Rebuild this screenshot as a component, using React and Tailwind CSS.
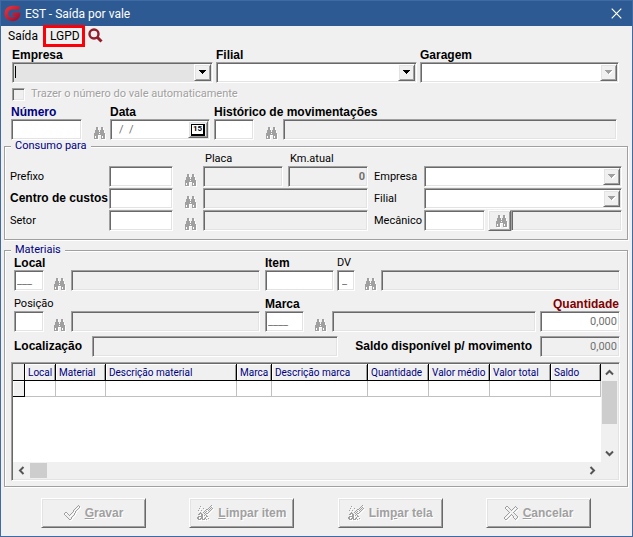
import React from 'react';

const SUNKEN =
  'border border-t-[#a0a0a0] border-l-[#a0a0a0] border-r-white border-b-white shadow-[inset_1px_1px_0_#696969,inset_-1px_-1px_0_#e3e3e3]';
const RAISED =
  'border border-t-white border-l-white border-r-[#696969] border-b-[#696969] bg-[#f0f0f0] shadow-[inset_1px_1px_0_#e3e3e3,inset_-1px_-1px_0_#a0a0a0]';
const ETCHED = 'border border-[#a0a0a0] shadow-[1px_1px_0_#fff,inset_1px_1px_0_#fff]';
const STRONG = "font-['Liberation_Sans',Arial,sans-serif] text-[12px] font-bold";

/* Small one-colour glyphs, one character per pixel, with the white disabled edge. */
function Bitmap({ rows, edge = true, color = '#a0a0a0' }) {
  let d = '';
  rows.forEach((row, y) => {
    [...row].forEach((c, x) => {
      if (c === 'X') d += `M${x} ${y}h1v1h-1z`;
    });
  });
  const w = rows[0].length + 1;
  const h = rows.length + 1;
  return (
    <svg width={w} height={h} viewBox={`0 0 ${w} ${h}`} shapeRendering="crispEdges" className="shrink-0" aria-hidden="true">
      {edge && <path d={d} fill="#fff" transform="translate(1 1)" />}
      <path d={d} fill={color} />
    </svg>
  );
}

const BINOCULARS = [
  '..XX...XX..',
  '..XX...XX..',
  '..XX...XX..',
  '.XXXX.XXXX.',
  '.XXXX.XXXX.',
  '.XXXXXXXXX.',
  'XXXXX.XXXXX',
  'XXXXXXXXXXX',
  'XXXX...XXXX',
  'X.XX...X.XX',
  'X.XX...X.XX',
  'XXXX...XXXX',
];
const CHECK = [
  '..............X.',
  '.............X.X',
  '............X..X',
  '...........X..X.',
  '..........X..X..',
  '.........X..X...',
  '.........X.X....',
  '.XX.....X..X....',
  'X..X...X..X.....',
  'X...X.X...X.....',
  '.X...X...X......',
  '..X.....X.......',
  '...X...X........',
  '....X..X........',
  '.....XX.........',
];
const CLEAN = [
  '..............X.',
  '...X.........X..',
  '............X.X.',
  '..X...X....X.X.X',
  '.........XX.X.X.',
  '.X..X...X..X.X..',
  '.......X.X..X...',
  '...X..X.X..X....',
  '..XXX..X.XX.....',
  '.XX.XX..X.......',
  '....XX.X.X......',
  '.XXXXX...XX.....',
  'XX..XX..X.......',
  'XX.XXX.XX..X....',
  '.XXX.XXX.X......',
];
const CROSS = [
  '..XX.......X..',
  '.X..X.....X.X.',
  '.X...X...X...X',
  '..X...X.X...X.',
  '...X...X...X..',
  '....X.....X...',
  '.....X...X....',
  '....X.....X...',
  '...X...X...X..',
  '..X...X.X...X.',
  '.X...X...X...X',
  'X...X....X...X',
  'X..X......X.X.',
  '.XX........X..',
];

const Binoculars = ({ className = 'w-[27px] pl-2.5' }) => (
  <button type="button" disabled aria-label="Pesquisar" className={`flex h-[21px] shrink-0 items-end ${className}`}>
    <Bitmap rows={BINOCULARS} />
  </button>
);

function Box({ id, className = '', off, ...rest }) {
  return (
    <input
      id={id}
      type="text"
      readOnly
      disabled={off}
      className={`h-[21px] min-w-0 px-1 text-[11px] leading-[17px] text-[#707070] outline-none ${SUNKEN} ${off ? 'bg-[#f0f0f0]' : 'bg-white'} ${className}`}
      {...rest}
    />
  );
}

function Combo({ id, gray, off, caret }) {
  return (
    <div className="relative h-[21px] w-full min-w-0">
      <select id={id} disabled={off} defaultValue="" className={`block h-[21px] w-full appearance-none px-1 outline-none ${SUNKEN} ${gray ? 'bg-[#e4e4e4]' : 'bg-white'}`}>
        <option value=""></option>
      </select>
      {caret && <span className="absolute left-[3px] top-1 h-3 w-px bg-black" />}
      <span className={`pointer-events-none absolute right-0.5 top-0.5 flex h-[17px] w-[17px] items-center justify-center ${RAISED}`}>
        <Bitmap rows={['XXXXXXX', '.XXXXX.', '..XXX..', '...X...']} edge={!!off} color={off ? '#a0a0a0' : '#000'} />
      </span>
    </div>
  );
}

/* A caption stacked over its control. */
function Field({ label, id, bold = true, color = 'text-black', className = '', labelClass = '', children }) {
  return (
    <div className={`flex min-w-0 flex-col ${className}`}>
      <label
        htmlFor={id}
        className={`whitespace-nowrap leading-[14px] ${bold ? STRONG : 'text-[11px]'} ${color} ${labelClass}`}
      >
        {label}
      </label>
      {children}
    </div>
  );
}

function Group({ title, className = '', children }) {
  return (
    <fieldset className={`min-w-0 ${ETCHED} ${className}`}>
      <legend className="ml-1.5 bg-[#f0f0f0] px-1 text-[11px] leading-[12px] text-[#000080]">{title}</legend>
      {children}
    </fieldset>
  );
}

function Action({ icon, children }) {
  return (
    <button
      type="button"
      disabled
      className={`flex h-[30px] w-[105px] items-center justify-center gap-1 whitespace-nowrap text-[#a0a0a0] [text-shadow:1px_1px_0_#fff] ${STRONG} ${RAISED}`}
    >
      <Bitmap rows={icon} />
      <span>{children}</span>
    </button>
  );
}

const COLUMNS = [
  ['Local', 'w-[31px]'],
  ['Material', 'w-[50px]'],
  ['Descrição material', 'w-[131px]'],
  ['Marca', 'w-[35px]'],
  ['Descrição marca', 'w-[96px]'],
  ['Quantidade', 'w-[61px]'],
  ['Valor médio', 'w-[61px]'],
  ['Valor total', 'w-[61px]'],
  ['Saldo', 'w-[50px]'],
];

function Chevron({ d }) {
  return (
    <svg width="9" height="9" viewBox="0 0 9 9" fill="none" stroke="#555" strokeWidth="2" aria-hidden="true">
      <path d={d} />
    </svg>
  );
}

function Materials() {
  return (
    <div className={`ml-1.5 mr-[7px] mt-[5px] bg-white p-px ${SUNKEN}`}>
      <div className="flex h-[98px]">
        <div className="min-w-0 flex-1 overflow-hidden">
          <table className="w-full table-fixed border-separate border-spacing-0">
            <thead>
              <tr className="h-[17px] bg-[#f0f0f0] text-left text-[10px] leading-[14px] text-[#000080]">
                <th className="w-3 border-b border-r border-black p-0" aria-label="Seleção" />
                {COLUMNS.map(([name, width]) => (
                  <th
                    key={name}
                    className={`whitespace-nowrap border-b border-r border-black p-0 pl-[3px] pt-px font-normal shadow-[inset_1px_1px_0_#fff,inset_-1px_0_0_#a0a0a0] ${width}`}
                  >
                    {name}
                  </th>
                ))}
              </tr>
            </thead>
            <tbody>
              <tr className="h-4">
                <td className="border-b border-r border-black bg-[#f0f0f0] p-0 shadow-[inset_1px_1px_0_#fff]" />
                {COLUMNS.map(([name]) => (
                  <td key={name} className="border-b border-r border-[#c0c0c0] p-0" />
                ))}
              </tr>
            </tbody>
          </table>
        </div>
        <div className="flex w-[17px] shrink-0 flex-col items-center bg-[#f0f0f0]">
          <span className="flex h-[17px] items-center"><Chevron d="M1 6.5 4.5 3 8 6.5" /></span>
          <span className="h-[43px] w-[15px] bg-[#cdcdcd]" />
          <span className="mt-auto flex h-[17px] items-center"><Chevron d="M1 2.5 4.5 6 8 2.5" /></span>
        </div>
      </div>
      <div className="flex h-[17px] items-center bg-[#f0f0f0] pr-[17px]">
        <span className="flex w-[17px] justify-center"><Chevron d="M6.5 1 3 4.5 6.5 8" /></span>
        <span className="h-[15px] w-[17px] bg-[#cdcdcd]" />
        <span className="ml-auto flex w-[17px] justify-center"><Chevron d="M2.5 1 6 4.5 2.5 8" /></span>
      </div>
    </div>
  );
}

export default function App() {
  return (
    <div className="min-h-screen w-full border border-[#3f6aa3] bg-[#f0f0f0] font-[Roboto,'Liberation_Sans',sans-serif] text-black">
      <header className="flex h-[25px] items-center bg-[#2d5a92] pl-[3px] pr-2.5 text-[12px] text-white">
        <svg width="17" height="17" viewBox="0 0 17 17" aria-hidden="true">
          <defs>
            <linearGradient id="brand" x1="0" y1="0" x2="1" y2="1">
              <stop offset="0" stopColor="#e8303a" />
              <stop offset="1" stopColor="#9c1030" />
            </linearGradient>
          </defs>
          <path
            fill="none"
            stroke="url(#brand)"
            strokeWidth="3.8"
            d="M15.500 3.600C13.500 2.800 11 2.700 9 2.700 5 2.700 2.300 5 2.300 8.400c0 3.600 2.600 5.900 6 5.900 3.600 0 5.800-1.900 6.100-4.900H8.600"
          />
        </svg>
        <h1 className="pl-1">EST - Saída por vale</h1>
        <button type="button" aria-label="Fechar" className="ml-auto">
          <svg width="11" height="11" viewBox="0 0 11 11" stroke="#fff" strokeWidth="1.2" aria-hidden="true">
            <path d="M.7.7 10.300 10.300M10.300.7.7 10.300" />
          </svg>
        </button>
      </header>

      <nav className="flex h-[22px] items-center pl-[7px] pb-[3px] text-[12px]">
        <button type="button" className="w-[42px] text-left">Saída</button>
        <button type="button" className="relative w-[38px] text-left">
          LGPD
          <span className="absolute -left-[7px] -top-0.5 h-[22px] w-[42px] border-[3px] border-[#fb0007]" />
        </button>
        <button type="button" aria-label="Pesquisar">
          <svg width="15" height="15" viewBox="0 0 15 15" fill="none" stroke="#941c2b" aria-hidden="true">
            <circle cx="6" cy="6" r="4.500" strokeWidth="2.400" />
            <path d="m9.500 9.500 4 4" strokeWidth="3" />
          </svg>
        </button>
      </nav>

      <main>
        <div className="grid grid-cols-[201fr_201fr_199fr] gap-[3px] pl-[11px] pr-[13px]">
          <Field label="Empresa" id="empresa"><Combo id="empresa" gray caret /></Field>
          <Field label="Filial" id="filial"><Combo id="filial" /></Field>
          <Field label="Garagem" id="garagem"><Combo id="garagem" off /></Field>
        </div>

        <div className="flex h-[22px] items-center gap-1.5 pl-[11px] pt-px text-[11px] text-[#a0a0a0] [text-shadow:1px_1px_0_#fff]">
          <input id="auto" type="checkbox" disabled className={`h-[13px] w-[13px] appearance-none bg-[#f0f0f0] ${SUNKEN}`} />
          <label htmlFor="auto">Trazer o número do vale automaticamente</label>
        </div>

        <div className="flex items-end pl-2.5 pr-[15px]">
          <Field label="Número" id="numero" color="text-[#000080]" className="w-[71px]"><Box id="numero" /></Field>
          <Binoculars className="w-7 pl-3" />
          <Field label="Data" id="data" className="w-[100px]">
            <div className="relative flex">
              <Box id="data" className="w-full pl-2" defaultValue="/  /" />
              <button type="button" aria-label="Calendário" className={`absolute right-0.5 top-0.5 flex h-[17px] w-5 items-center justify-center ${RAISED}`}>
                <span className="flex h-[12px] w-[14px] items-center justify-center border border-b-2 border-r-2 border-black bg-white text-[8px] font-bold leading-none">15</span>
              </button>
            </div>
          </Field>
          <Field label="Histórico de movimentações" id="historico" className="ml-1 w-10"><Box id="historico" /></Field>
          <Binoculars className="w-[29px] pl-3" />
          <Box off aria-label="Descrição do histórico" className="flex-1" />
        </div>

        <div className="pl-[3px] pr-1">
          <Group title="Consumo para" className="pb-2">
            <div className="grid grid-cols-[minmax(0,358fr)_minmax(0,248fr)] items-end gap-1.5 px-[5px] text-[11px]">
              <div className="flex flex-col gap-px">
                <div className="flex items-end">
                  <label htmlFor="prefixo" className="w-[99px] shrink-0 leading-[21px]">Prefixo</label>
                  <Box id="prefixo" className="w-16 shrink-0" />
                  <Binoculars className="w-[30px] pl-3" />
                  <div className="flex min-w-0 flex-1 gap-[5px]">
                    <Field label="Placa" id="placa" bold={false} className="flex-1" labelClass="pl-0.5 leading-[13px]"><Box id="placa" off /></Field>
                    <Field label="Km.atual" id="km" bold={false} className="flex-1" labelClass="pl-0.5 leading-[13px]">
                      <Box id="km" off defaultValue="0" className="pr-0.5 text-right font-bold" />
                    </Field>
                  </div>
                </div>
                <div className="flex">
                  <label htmlFor="centro" className={`w-[99px] shrink-0 whitespace-nowrap leading-[21px] ${STRONG}`}>Centro de custos</label>
                  <Box id="centro" className="w-16 shrink-0" />
                  <Binoculars className="w-[30px] pl-3" />
                  <Box off aria-label="Descrição do centro de custos" className="flex-1" />
                </div>
                <div className="flex">
                  <label htmlFor="setor" className="w-[99px] shrink-0 leading-[21px]">Setor</label>
                  <Box id="setor" className="w-16 shrink-0" />
                  <Binoculars className="w-[30px] pl-3" />
                  <Box off aria-label="Descrição do setor" className="flex-1" />
                </div>
              </div>
              <div className="flex flex-col gap-px">
                <div className="flex">
                  <label htmlFor="empresa2" className="w-[50px] shrink-0 leading-[21px]">Empresa</label>
                  <Combo id="empresa2" off />
                </div>
                <div className="flex">
                  <label htmlFor="filial2" className="w-[50px] shrink-0 leading-[21px]">Filial</label>
                  <Combo id="filial2" off />
                </div>
                <div className="flex">
                  <label htmlFor="mecanico" className="w-[50px] shrink-0 leading-[21px]">Mecânico</label>
                  <Box id="mecanico" className="w-[61px] shrink-0" />
                  <button type="button" disabled aria-label="Pesquisar mecânico" className={`ml-[3px] flex h-[21px] w-[23px] shrink-0 items-end justify-end pb-0.5 pr-0.5 ${RAISED}`}>
                    <Bitmap rows={BINOCULARS} />
                  </button>
                  <Box off aria-label="Nome do mecânico" className="flex-1" />
                </div>
              </div>
            </div>
          </Group>

          <Group title="Materiais" className="mt-1 pb-[5px]">
            <div className="grid grid-cols-[minmax(0,246fr)_minmax(0,355fr)] gap-x-[5px] gap-y-1.5 pl-[9px] pr-[7px]">
              <div className="flex items-end">
                <Field label="Local" id="local" className="w-[30px]"><Box id="local" defaultValue="___" className="pl-0.5" /></Field>
                <Binoculars />
                <Box off aria-label="Descrição do local" className="flex-1" />
              </div>
              <div className="flex items-end">
                <Field label="Item" id="item" className="w-[69px]"><Box id="item" /></Field>
                <Field label="DV" id="dv" bold={false} className="ml-[3px] w-[18px]"><Box id="dv" defaultValue="_" className="px-0.5" /></Field>
                <Binoculars className="w-[26px] pl-2.5" />
                <Box off aria-label="Descrição do item" className="flex-1" />
              </div>
              <div className="flex items-end">
                <Field label="Posição" id="posicao" bold={false} className="w-[30px]"><Box id="posicao" /></Field>
                <Binoculars />
                <Box off aria-label="Descrição da posição" className="flex-1" />
              </div>
              <div className="flex items-end">
                <Field label="Marca" id="marca" className="w-[39px]"><Box id="marca" defaultValue="____" className="pl-0.5" /></Field>
                <Binoculars className="w-7 pl-[11px]" />
                <Box off aria-label="Descrição da marca" className="mr-1 flex-1" />
                <Field label="Quantidade" id="qtd" color="text-[#800000]" className="w-20" labelClass="pr-px text-right">
                  <Box id="qtd" defaultValue="0,000" className="pr-0.5 text-right" />
                </Field>
              </div>
            </div>
            <div className={`mt-1 flex pl-[9px] pr-[7px] leading-[21px] ${STRONG}`}>
              <label htmlFor="localizacao" className="w-[78px] shrink-0">Localização</label>
              <Box id="localizacao" off className="flex-[246]" />
              <label htmlFor="saldo" className="flex-[202] whitespace-nowrap pr-2 text-right">Saldo disponível p/ movimento</label>
              <Box id="saldo" off defaultValue="0,000" className="w-20 pr-0.5 text-right font-[Roboto] font-normal" />
            </div>
            <Materials />
          </Group>
        </div>

        <footer className="flex items-start justify-between pb-2 pl-10 pr-[41px] pt-[11px]">
          <Action icon={CHECK}><u>G</u>ravar</Action>
          <Action icon={CLEAN}><u>L</u>impar item</Action>
          <Action icon={CLEAN}>Lim<u>p</u>ar tela</Action>
          <Action icon={CROSS}><u>C</u>ancelar</Action>
        </footer>
      </main>
    </div>
  );
}
